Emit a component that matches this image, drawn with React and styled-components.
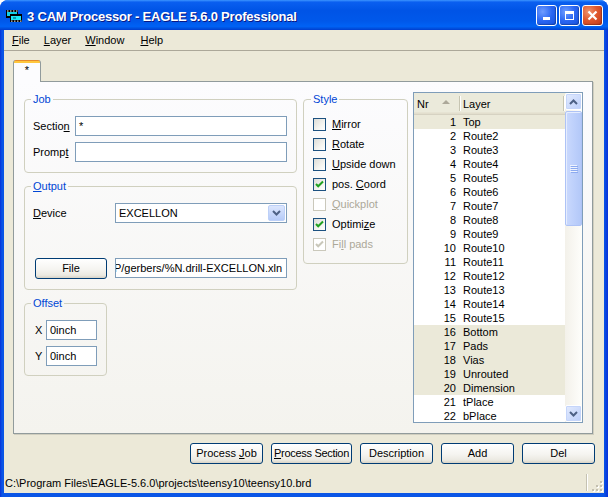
import React from 'react'
import styled, { createGlobalStyle } from 'styled-components'

const GlobalStyle = createGlobalStyle`
  html, body {
    margin: 0;
    padding: 0;
    background: #fff;
  }
  body {
    font-family: Tahoma, "Liberation Sans", Arial, sans-serif;
    font-size: 11px;
    color: #000;
  }
`

const Frame = styled.div`
  width: 608px;
  height: 497px;
  display: flex;
  flex-direction: column;
  background: linear-gradient(to right, #0831d9 0, #0a55e6 2px, #0a55e6 604px, #0831d9 608px);
  border-radius: 8px 8px 0 0;
  overflow: hidden;
`

const TitleBar = styled.div`
  height: 30px;
  flex: none;
  box-sizing: border-box;
  display: flex;
  align-items: center;
  padding: 1px 5px 0 6px;
  background: linear-gradient(
    to bottom,
    #3d95ff 0%,
    #0a5ff0 7%,
    #0054e6 35%,
    #0058ea 70%,
    #0062f5 88%,
    #0052e0 94%,
    #003dd0 100%
  );
  color: #fff;
`

const TitleText = styled.div`
  flex: 1;
  margin-left: 5px;
  padding-top: 2px;
  font-family: "Trebuchet MS", "Liberation Sans", Arial, sans-serif;
  font-weight: bold;
  font-size: 13px;
  letter-spacing: -0.2px;
  text-shadow: 1px 1px 0 #0a1883;
  white-space: nowrap;
`

const CaptionButtons = styled.div`
  display: flex;
  gap: 2px;
  margin-top: -1px;
`

const CaptionButton = styled.div`
  width: 21px;
  height: 21px;
  box-sizing: border-box;
  border: 1px solid #fff;
  border-radius: 3px;
  display: flex;
  align-items: center;
  justify-content: center;
  background: ${p =>
    p.$close
      ? 'radial-gradient(circle at 30% 30%, #f0946f 0%, #e0582d 45%, #c0381a 100%)'
      : 'radial-gradient(circle at 30% 30%, #6e9cff 0%, #2a66f2 50%, #1450dc 100%)'};
  box-shadow: inset -1px -1px 1px rgba(0, 0, 0, 0.25);
`

const Client = styled.div`
  flex: 1;
  min-height: 0;
  margin: 0 4px 4px;
  background: #ece9d8;
  display: flex;
  flex-direction: column;
`

const MenuBar = styled.div`
  height: 20px;
  flex: none;
  display: flex;
  align-items: center;
  padding-left: 1px;
  border-bottom: 1px solid #aca899;
`

const MenuItem = styled.span`
  padding: 0 7px;
  margin-right: ${p => p.$extra || 0}px;
  line-height: 20px;
`

const U = styled.span`
  text-decoration: underline;
  text-underline-offset: 1px;
`

const TabArea = styled.div`
  flex: 1;
  min-height: 0;
  display: flex;
  flex-direction: column;
  padding: 9px 11px 0 9px;
`

const Tab = styled.div`
  position: relative;
  z-index: 1;
  width: 28px;
  height: 22px;
  margin-bottom: -1px;
  box-sizing: border-box;
  border: 1px solid #919b9c;
  border-top: none;
  border-bottom: none;
  border-radius: 3px 3px 0 0;
  background: linear-gradient(to bottom, #e68b2c 0, #e68b2c 1px, #ffc73c 1px, #ffc73c 3px, #fcfcfe 3px);
  text-align: center;
  line-height: 19px;
  padding-top: 1px;
`

const Panel = styled.div`
  flex: 1;
  min-height: 0;
  display: flex;
  align-items: stretch;
  padding: 10px 9px 10px 10px;
  border: 1px solid #919b9c;
  background: linear-gradient(to bottom, #fcfcfe, #f4f3ee);
  box-shadow: 1px 1px 0 #d0cebf;
`

const LeftColumn = styled.div`
  width: 273px;
  flex: none;
  display: flex;
  flex-direction: column;
  align-items: flex-start;
  gap: 7px;
  margin-top: 1px;
`

const Group = styled.fieldset`
  margin: 0;
  box-sizing: border-box;
  width: ${p => p.$width}px;
  min-width: 0;
  padding: ${p => p.$pad || '10px 9px 10px 8px'};
  border: 1px solid #d0d0bf;
  border-radius: 4px;
`

const Legend = styled.legend`
  color: #0046d5;
  padding: 0 2px;
  margin-left: -2px;
  line-height: 13px;
`

const FieldRow = styled.div`
  display: flex;
  align-items: center;
  height: 20px;
  & + & {
    margin-top: 6px;
  }
`

const FieldLabel = styled.span`
  flex: none;
  width: ${p => p.$w}px;
  padding-left: ${p => p.$indent || 0}px;
  box-sizing: border-box;
`

const TextBox = styled.div`
  flex: ${p => (p.$w ? 'none' : 1)};
  width: ${p => (p.$w ? `${p.$w}px` : 'auto')};
  min-width: 0;
  height: 20px;
  box-sizing: border-box;
  border: 1px solid #7f9db9;
  background: #fff;
  padding: 0 4px 0 3px;
  line-height: 18px;
  white-space: nowrap;
  overflow: hidden;
  display: flex;
  justify-content: ${p => (p.$end ? 'flex-end' : 'flex-start')};
`

const Combo = styled.div`
  flex: 1;
  height: 20px;
  box-sizing: border-box;
  border: 1px solid #7f9db9;
  background: #fff;
  display: flex;
  align-items: stretch;
  padding: 1px;
  line-height: 16px;
`

const ComboText = styled.span`
  flex: 1;
  padding-left: 2px;
`

const ComboButton = styled.span`
  width: 15px;
  flex: none;
  border: 1px solid #bdd0f8;
  border-radius: 2px;
  background: linear-gradient(to bottom, #dce6fd, #b6cbf8);
  display: flex;
  align-items: center;
  justify-content: center;
`

const Button = styled.button`
  flex: none;
  width: ${p => p.$w || 73}px;
  height: 21px;
  padding: 0;
  margin-left: ${p => p.$ml || 0}px;
  margin-right: ${p => p.$mr || 0}px;
  border: 1px solid #003c74;
  border-radius: 3px;
  background: linear-gradient(to bottom, #ffffff 0%, #f5f4f0 55%, #ebe9e1 85%, #d8d3c6 100%);
  font: inherit;
  color: #000;
  line-height: 19px;
  white-space: nowrap;
  overflow: visible;
  letter-spacing: ${p => (p.$tight ? '-0.3px' : 'normal')};
`

const FileRow = styled.div`
  display: flex;
  align-items: flex-start;
  margin-top: 35px;
`

const StyleGroup = styled(Group)`
  flex: none;
  align-self: flex-start;
  margin: 1px 0 0 6px;
`

const CheckList = styled.div`
  display: flex;
  flex-direction: column;
  gap: 7px;
`

const CheckRow = styled.div`
  display: flex;
  align-items: center;
  height: 13px;
  line-height: 13px;
  gap: 6px;
  white-space: nowrap;
  color: ${p => (p.$disabled ? '#aca899' : '#000')};
`

const Box = styled.span`
  width: 13px;
  height: 13px;
  flex: none;
  box-sizing: border-box;
  border: 1px solid ${p => (p.$disabled ? '#cac8bb' : '#1c5180')};
  background: ${p => (p.$disabled ? '#fff' : 'linear-gradient(135deg, #dcdcd7 0%, #f4f4f0 60%, #fff 100%)')};
  display: flex;
  align-items: center;
  justify-content: center;
`

const LayerList = styled.div`
  width: 170px;
  flex: none;
  margin-left: 5px;
  box-sizing: border-box;
  border: 1px solid #7f9db9;
  background: #fff;
  display: flex;
  overflow: hidden;
`

const Table = styled.div`
  flex: 1;
  min-width: 0;
  display: flex;
  flex-direction: column;
`

const Header = styled.div`
  height: 22px;
  flex: none;
  box-sizing: border-box;
  display: flex;
  align-items: center;
  background: #ebeadb;
  border-bottom: 1px solid #d6d2c2;
  box-shadow: inset 0 -1px 0 #e2decd, inset 0 -2px 0 #e6e3d3;
`

const HeaderCell = styled.div`
  width: ${p => p.$w}px;
  flex: none;
  box-sizing: border-box;
  padding-left: ${p => p.$pad}px;
  display: flex;
  align-items: center;
`

const SortArrow = styled.span`
  margin-left: 13px;
  margin-bottom: 3px;
  width: 0;
  height: 0;
  border-left: 4px solid transparent;
  border-right: 4px solid transparent;
  border-bottom: 4px solid #aca899;
`

const HeaderDivider = styled.span`
  width: 1px;
  height: 15px;
  flex: none;
  background: #c7c5b2;
  box-shadow: 1px 0 0 #fff;
`

const Row = styled.div`
  height: 14px;
  flex: none;
  display: flex;
  align-items: center;
  line-height: 14px;
  background: ${p => (p.$used ? '#ebe9d9' : 'transparent')};
  white-space: nowrap;
`

const NrCell = styled.span`
  width: 42px;
  flex: none;
  text-align: right;
`

const NameCell = styled.span`
  padding-left: 7px;
`

const ScrollBar = styled.div`
  width: 17px;
  flex: none;
  display: flex;
  flex-direction: column;
  background: linear-gradient(to right, #f3f1ea, #fefefb);
`

const ScrollButton = styled.div`
  height: 17px;
  flex: none;
  box-sizing: border-box;
  border: 1px solid #fff;
  border-radius: 2px;
  background: linear-gradient(to bottom right, #e3ebfe, #bccffa);
  box-shadow: inset 0 0 0 1px #c5d5fa;
  display: flex;
  align-items: center;
  justify-content: center;
  margin-top: ${p => (p.$bottom ? 'auto' : '0')};
`

const Thumb = styled.div`
  height: 115px;
  flex: none;
  margin-top: 1px;
  box-sizing: border-box;
  border: 1px solid #aec3f6;
  border-radius: 2px;
  background: linear-gradient(to right, #cad9fd, #bccffb 60%, #b3c8f8);
  box-shadow: inset 1px 1px 0 #e6edfe;
  display: flex;
  align-items: center;
  justify-content: center;
`

const ButtonRow = styled.div`
  flex: none;
  display: flex;
  justify-content: flex-end;
  gap: 8px;
  padding: 9px 9px 0 0;
`

const StatusBar = styled.div`
  height: 22px;
  flex: none;
  margin-top: 7px;
  display: flex;
  align-items: center;
  padding-left: 1px;
`

const StatusText = styled.span`
  flex: 1;
  white-space: nowrap;
  padding-top: 2px;
`

const StatusSep = styled.span`
  width: 1px;
  height: 17px;
  background: #c5c2b2;
  box-shadow: 1px 0 0 #fff;
  margin-right: 4px;
`

const Grip = styled.svg`
  align-self: flex-end;
  margin: 0 1px 1px 0;
`

const AppIcon = () => (
  <svg width="16" height="16" viewBox="0 0 16 16">
    <rect x="0" y="2" width="12" height="8" fill="#000" />
    <rect x="1" y="4" width="10" height="4" fill="#11d0e6" />
    {[1, 4, 7, 10].map(x => (
      <rect key={x} x={x} y="2.5" width="1.5" height="1" fill="#fff" />
    ))}
    <rect x="4" y="6" width="12" height="8" fill="#000" />
    <rect x="5" y="8" width="10" height="4" fill="#1ee8f4" />
    <rect x="7" y="9" width="3" height="2" fill="#0a9bb0" />
    {[5, 8, 11, 14].map(x => (
      <rect key={x} x={x} y="12.6" width="1.5" height="1" fill="#fff" />
    ))}
  </svg>
)

const Check = ({ color }) => (
  <svg width="9" height="9" viewBox="0 0 9 9">
    <path d="M1 4 L3.2 6.3 L8 1.5" fill="none" stroke={color} strokeWidth="2" />
  </svg>
)

const Chevron = ({ up, color = '#4d6185' }) => (
  <svg width="9" height="6" viewBox="0 0 9 6">
    <path
      d={up ? 'M1 5 L4.5 1.5 L8 5' : 'M1 1 L4.5 4.5 L8 1'}
      fill="none"
      stroke={color}
      strokeWidth="2"
    />
  </svg>
)

const styleOptions = [
  { label: ['', 'M', 'irror'] },
  { label: ['', 'R', 'otate'] },
  { label: ['', 'U', 'pside down'] },
  { label: ['pos. ', 'C', 'oord'], checked: true },
  { label: ['', 'Q', 'uickplot'], disabled: true },
  { label: ['Optimi', 'z', 'e'], checked: true },
  { label: ['Fi', 'l', 'l pads'], checked: true, disabled: true },
]

const layers = [
  [1, 'Top', true],
  [2, 'Route2'],
  [3, 'Route3'],
  [4, 'Route4'],
  [5, 'Route5'],
  [6, 'Route6'],
  [7, 'Route7'],
  [8, 'Route8'],
  [9, 'Route9'],
  [10, 'Route10'],
  [11, 'Route11'],
  [12, 'Route12'],
  [13, 'Route13'],
  [14, 'Route14'],
  [15, 'Route15'],
  [16, 'Bottom', true],
  [17, 'Pads', true],
  [18, 'Vias', true],
  [19, 'Unrouted', true],
  [20, 'Dimension', true],
  [21, 'tPlace'],
  [22, 'bPlace'],
]

export default function App() {
  return (
    <>
      <GlobalStyle />
      <Frame>
        <TitleBar>
          <AppIcon />
          <TitleText>3 CAM Processor - EAGLE 5.6.0 Professional</TitleText>
          <CaptionButtons>
            <CaptionButton>
              <svg width="13" height="13" viewBox="0 0 13 13">
                <rect x="3" y="8" width="7" height="3" fill="#fff" />
              </svg>
            </CaptionButton>
            <CaptionButton>
              <svg width="13" height="13" viewBox="0 0 13 13">
                <rect x="2.5" y="2.5" width="8" height="8" fill="none" stroke="#fff" strokeWidth="1" />
                <rect x="2" y="2" width="9" height="3" fill="#fff" />
              </svg>
            </CaptionButton>
            <CaptionButton $close>
              <svg width="13" height="13" viewBox="0 0 13 13">
                <path d="M2.5 2.5 L10.5 10.5 M10.5 2.5 L2.5 10.5" stroke="#fff" strokeWidth="2.2" />
              </svg>
            </CaptionButton>
          </CaptionButtons>
        </TitleBar>

        <Client>
          <MenuBar>
            <MenuItem><U>F</U>ile</MenuItem>
            <MenuItem><U>L</U>ayer</MenuItem>
            <MenuItem $extra={2}><U>W</U>indow</MenuItem>
            <MenuItem><U>H</U>elp</MenuItem>
          </MenuBar>

          <TabArea>
            <Tab>*</Tab>
            <Panel>
              <LeftColumn>
                <Group $width={273}>
                  <Legend>Job</Legend>
                  <FieldRow>
                    <FieldLabel $w={42}>Sectio<U>n</U></FieldLabel>
                    <TextBox>*</TextBox>
                  </FieldRow>
                  <FieldRow>
                    <FieldLabel $w={42}>Promp<U>t</U></FieldLabel>
                    <TextBox />
                  </FieldRow>
                </Group>

                <Group $width={273}>
                  <Legend><U>O</U>utput</Legend>
                  <FieldRow>
                    <FieldLabel $w={82}><U>D</U>evice</FieldLabel>
                    <Combo>
                      <ComboText>EXCELLON</ComboText>
                      <ComboButton>
                        <Chevron />
                      </ComboButton>
                    </Combo>
                  </FieldRow>
                  <FileRow>
                    <Button $w={72} $ml={2} $mr={8}>File</Button>
                    <TextBox $end>%P/gerbers/%N.drill-EXCELLON.xln</TextBox>
                  </FileRow>
                </Group>

                <Group $width={83} $pad="10px 9px 9px 8px">
                  <Legend>Offset</Legend>
                  <FieldRow>
                    <FieldLabel $w={13} $indent={2}>X</FieldLabel>
                    <TextBox $w={51}>0inch</TextBox>
                  </FieldRow>
                  <FieldRow>
                    <FieldLabel $w={13} $indent={2}>Y</FieldLabel>
                    <TextBox $w={51}>0inch</TextBox>
                  </FieldRow>
                </Group>
              </LeftColumn>

              <StyleGroup $width={105} $pad="12px 9px 12px 9px">
                <Legend>Style</Legend>
                <CheckList>
                  {styleOptions.map(o => (
                    <CheckRow key={o.label.join('')} $disabled={o.disabled}>
                      <Box $disabled={o.disabled}>
                        {o.checked && <Check color={o.disabled ? '#c9c7ba' : '#21a121'} />}
                      </Box>
                      <span>
                        {o.label[0]}
                        <U>{o.label[1]}</U>
                        {o.label[2]}
                      </span>
                    </CheckRow>
                  ))}
                </CheckList>
              </StyleGroup>

              <LayerList>
                <Table>
                  <Header>
                    <HeaderCell $w={45} $pad={3}>
                      Nr
                      <SortArrow />
                    </HeaderCell>
                    <HeaderDivider />
                    <HeaderCell $w={103} $pad={3}>Layer</HeaderCell>
                    <HeaderDivider />
                  </Header>
                  {layers.map(([nr, name, used]) => (
                    <Row key={nr} $used={used}>
                      <NrCell>{nr}</NrCell>
                      <NameCell>{name}</NameCell>
                    </Row>
                  ))}
                </Table>
                <ScrollBar>
                  <ScrollButton>
                    <Chevron up />
                  </ScrollButton>
                  <Thumb>
                    <svg width="8" height="8" viewBox="0 0 8 8">
                      {[0, 2, 4, 6].map(y => (
                        <g key={y}>
                          <rect x="0" y={y} width="7" height="1" fill="#eef3fe" />
                          <rect x="1" y={y + 1} width="7" height="1" fill="#8caaf0" />
                        </g>
                      ))}
                    </svg>
                  </Thumb>
                  <ScrollButton $bottom>
                    <Chevron />
                  </ScrollButton>
                </ScrollBar>
              </LayerList>
            </Panel>
          </TabArea>

          <ButtonRow>
            <Button>Process <U>J</U>ob</Button>
            <Button $w={81} $tight><U>P</U>rocess Section</Button>
            <Button>Description</Button>
            <Button>Add</Button>
            <Button>Del</Button>
          </ButtonRow>

          <StatusBar>
            <StatusText>C:\Program Files\EAGLE-5.6.0\projects\teensy10\teensy10.brd</StatusText>
            <StatusSep />
            <Grip width="12" height="12" viewBox="0 0 12 12">
              {[
                [9, 1], [9, 5], [5, 5], [9, 9], [5, 9], [1, 9],
              ].map(([x, y]) => (
                <g key={`${x}-${y}`}>
                  <rect x={x + 1} y={y + 1} width="2" height="2" fill="#fff" />
                  <rect x={x} y={y} width="2" height="2" fill="#c3bfaf" />
                </g>
              ))}
            </Grip>
          </StatusBar>
        </Client>
      </Frame>
    </>
  )
}
